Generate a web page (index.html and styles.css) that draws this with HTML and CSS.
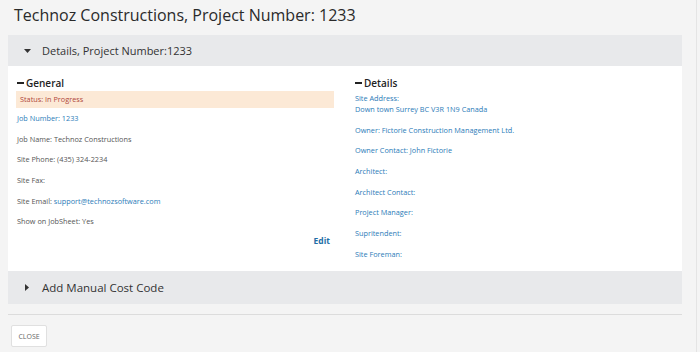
FILE: index.html
```html
<!DOCTYPE html>
<html>
<head>
<meta charset="utf-8">
<link rel="stylesheet" href="styles.css">
</head>
<body>
<div class="page">
  <div class="modal">
    <h1 class="title">Technoz Constructions, Project Number: 1233</h1>
    <div class="acc">
      <div class="acc-head">
        <svg class="caret" width="7" height="4" viewBox="0 0 7 4"><path d="M0 0H7L3.5 4Z" fill="#333"/></svg>
        <span>Details, Project Number:1233</span>
      </div>
      <div class="acc-body">
        <div class="col left">
          <div class="sec-title"><span class="dash"></span>General</div>
          <div class="status">Status: In Progress</div>
          <div class="field link">Job Number: 1233</div>
          <div class="field">Job Name: Technoz Constructions</div>
          <div class="field">Site Phone: (435) 324-2234</div>
          <div class="field">Site Fax:</div>
          <div class="field">Site Email: <span class="blue">support@technozsoftware.com</span></div>
          <div class="field">Show on JobSheet: Yes</div>
          <div class="edit-row"><a class="edit">Edit</a></div>
        </div>
        <div class="col right">
          <div class="sec-title"><span class="dash"></span>Details</div>
          <div class="field link first">Site Address:<br>Down town Surrey BC V3R 1N9 Canada</div>
          <div class="field link">Owner: Fictorie Construction Management Ltd.</div>
          <div class="field link">Owner Contact: John Fictorie</div>
          <div class="field link">Architect:</div>
          <div class="field link">Architect Contact:</div>
          <div class="field link">Project Manager:</div>
          <div class="field link">Supritendent:</div>
          <div class="field link">Site Foreman:</div>
        </div>
      </div>
      <div class="acc-head second">
        <svg class="caret-r" width="4" height="7" viewBox="0 0 4 7"><path d="M0 0V7L4 3.5Z" fill="#333"/></svg>
        <span>Add Manual Cost Code</span>
      </div>
    </div>
    <div class="footer">
      <button class="close">CLOSE</button>
    </div>
  </div>
</div>
</body>
</html>
```

FILE: styles.css
```css
html, body {
  margin: 0;
  padding: 0;
  background: #f4f4f4;
}
body {
  font-family: "Open Sans", "Liberation Sans", sans-serif;
  width: 700px;
  height: 352px;
  overflow: hidden;
}
.page {
  width: 696px;
  height: 352px;
  border-right: 1px solid #e4e4e4;
}
.modal {
  margin-left: 8px;
  width: 674px;
}
.title {
  margin: 0;
  padding: 3px 0 0 6px;
  height: 32px;
  font-size: 16px;
  font-weight: 400;
  color: #2a2a2a;
  line-height: 24px;
}
.acc-head {
  height: 31px;
  background: #e8e9eb;
  display: flex;
  align-items: center;
  padding-left: 15px;
  font-size: 11px;
  color: #333;
}
.acc-head .caret {
  margin-left: 1px;
  margin-right: 11px;
}
.acc-head.second {
  height: 33px;
  font-size: 11.5px;
}
.acc-head .caret-r {
  margin-left: 2px;
  margin-right: 13px;
}
.acc-body {
  background: #fff;
  display: flex;
  padding: 10px 8px 18px 8px;
  height: 177px;
}
.col.left {
  width: 318px;
}
.col.right {
  margin-left: 20px;
}
.sec-title {
  display: flex;
  align-items: center;
  font-size: 10px;
  font-weight: 600;
  color: #222;
  height: 13px;
  margin-left: 1px;
}
.dash {
  display: inline-block;
  width: 7px;
  height: 2px;
  background: #222;
  margin-right: 2px;
}
.status {
  margin-top: 2px;
  background: #fce9d6;
  color: #b0473a;
  font-size: 7.3px;
  height: 17px;
  line-height: 17px;
  padding-left: 4px;
  margin-bottom: 5px;
}
.field {
  font-size: 7.3px;
  line-height: 11px;
  color: #555;
  margin-bottom: 9.7px;
  margin-left: 1px;
}
.field.first {
  margin-top: 4px;
}
.link, .blue {
  color: #2b7bb8;
}
.edit-row {
  display: flex;
  justify-content: flex-end;
  padding-right: 4px;
  margin-top: -2px;
}
.edit {
  font-size: 8.5px;
  font-weight: 700;
  color: #1f6ea6;
}
.footer {
  display: flex;
  margin-top: 10px;
  border-top: 1px solid #dcdcdc;
  padding-top: 10px;
}
.close {
  margin-left: 3px;
  width: 36px;
  height: 22px;
  background: #fff;
  border: 1px solid #e0e0e0;
  border-radius: 2px;
  font-family: "Open Sans", "Liberation Sans", sans-serif;
  font-size: 7px;
  color: #666;
  padding: 0;
}
```
